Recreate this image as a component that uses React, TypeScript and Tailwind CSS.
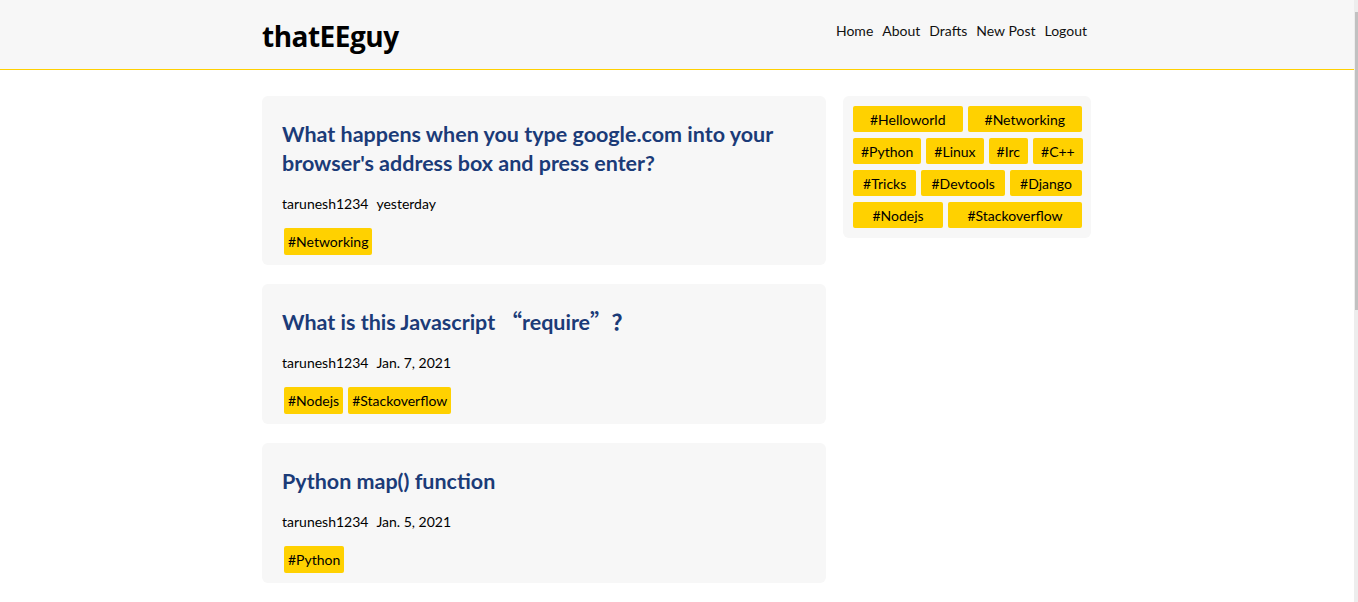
import React from "react";

const cjk = { fontFamily: "'Noto Sans CJK SC', sans-serif" };

const posts: { key: string; title: React.ReactNode; date: string; tags: string[] }[] = [
  {
    key: "p1",
    title: "What happens when you type google.com into your browser's address box and press enter?",
    date: "yesterday",
    tags: ["#Networking"],
  },
  {
    key: "p2",
    title: (
      <>
        What is this Javascript{" "}
        <span className="leading-none" style={cjk}>
          {"\u201c"}
        </span>
        require
        <span className="leading-none" style={cjk}>
          {"\u201d\uff1f"}
        </span>
      </>
    ),
    date: "Jan. 7, 2021",
    tags: ["#Nodejs", "#Stackoverflow"],
  },
  { key: "p3", title: "Python map() function", date: "Jan. 5, 2021", tags: ["#Python"] },
  { key: "p4", title: "Useful Linux commands for everyday use", date: "Jan. 3, 2021", tags: ["#Linux", "#Tricks"] },
  { key: "p5", title: "Getting started with Django", date: "Jan. 2, 2021", tags: ["#Django", "#Python"] },
  { key: "p6", title: "Hello world", date: "Jan. 1, 2021", tags: ["#Helloworld"] },
];

const sideRows = [
  ["#Helloworld", "#Networking"],
  ["#Python", "#Linux", "#Irc", "#C++"],
  ["#Tricks", "#Devtools", "#Django"],
  ["#Nodejs", "#Stackoverflow"],
];

const font = { fontFamily: "Lato, 'Liberation Sans', sans-serif" };

export default function App() {
  return (
    <div className="min-h-screen bg-white text-black pr-[4px]" style={font}>
      <header className="h-[70px] bg-[#f7f7f7] border-b border-[#ffd000]">
        <div className="mx-auto w-[830px] h-full flex items-center justify-between pr-[5px]">
          <a
            className="text-[28px] font-bold tracking-[-0.5px] text-black leading-none pt-[2px]"
            style={{ fontFamily: "'Open Sans', 'Noto Sans', sans-serif" }}
          >
            thatEEguy
          </a>
          <nav className="flex gap-[9px] text-[14px] text-[#111] pb-[8px] pl-[2px]">
            <a>Home</a>
            <a>About</a>
            <a>Drafts</a>
            <a>New Post</a>
            <a>Logout</a>
          </nav>
        </div>
      </header>
      <main className="mx-auto w-[830px] flex gap-[17px] pt-[26px] pb-[40px]">
        <div className="w-[564px] flex flex-col gap-[19px]">
          {posts.map((p) => (
            <article key={p.key} className="bg-[#f7f7f7] rounded-[6px] px-[20px] pt-[24px] pb-[10px]">
              <h2 className="text-[21.5px] leading-[29px] font-bold text-[#1b3b78]">{p.title}</h2>
              <div className="mt-[15px] text-[14px] leading-[21px] flex gap-[8px]">
                <span>tarunesh1234</span>
                <span>{p.date}</span>
              </div>
              <div className="mt-[14px] flex gap-[5px] pl-[2px]">
                {p.tags.map((t) => (
                  <span key={t} className="bg-[#ffd100] rounded-[2px] h-[27px] px-[4px] text-[14px] flex items-center">
                    {t}
                  </span>
                ))}
              </div>
            </article>
          ))}
        </div>
        <aside className="w-[248px] self-start bg-[#f7f7f7] rounded-[6px] pl-[10px] pr-[9px] py-[10px] flex flex-col gap-[6px]">
          {sideRows.map((row, i) => (
            <div key={i} className="flex gap-[5px]">
              {row.map((t) => (
                <span
                  key={t}
                  className="grow bg-[#ffd100] rounded-[2px] h-[26px] px-[8px] text-[14px] flex items-center justify-center"
                >
                  {t}
                </span>
              ))}
            </div>
          ))}
        </aside>
      </main>
      <div className="fixed top-0 right-0 w-[4px] h-screen bg-[#ededed]">
        <div className="mt-[12px] ml-[1px] h-[298px] bg-[#c1c1c1]" />
      </div>
    </div>
  );
}
